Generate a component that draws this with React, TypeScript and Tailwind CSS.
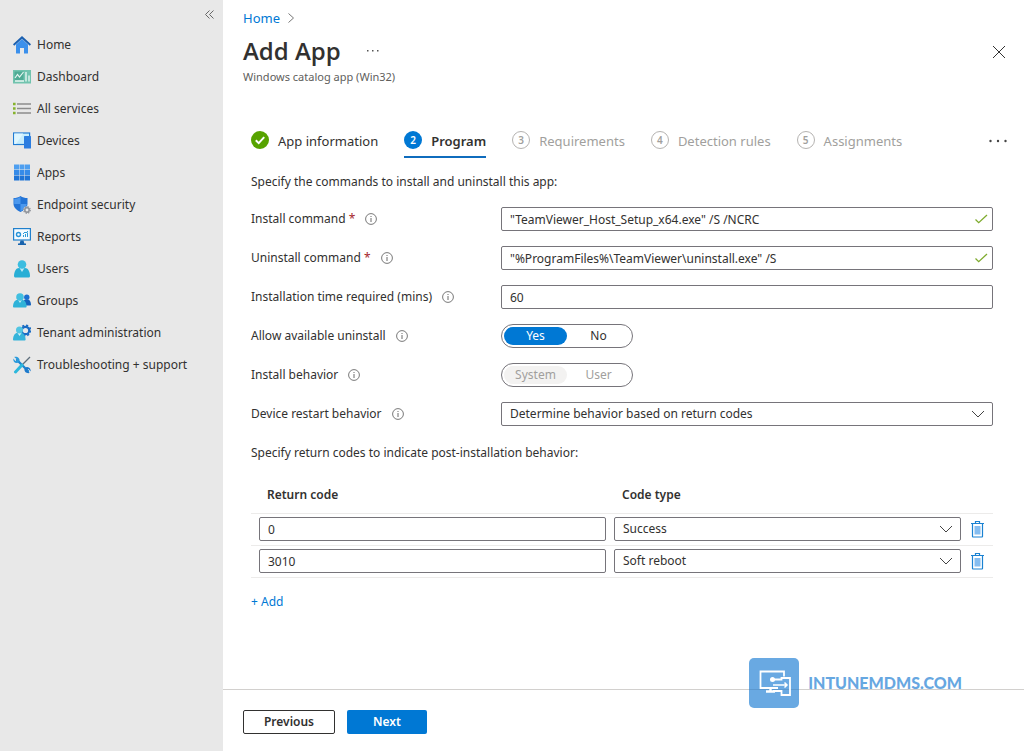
import { useState, type ReactNode } from "react";
import clsx from "clsx";

interface NavItem {
  title: string;
  icon: ReactNode;
}

interface ReturnCode {
  code: string;
  type: string;
}

const navItems: NavItem[] = [
  {
    title: "Home",
    icon: (
      <>
        <path d="M3 8.500 9 3l6 5.500V17a.5.5 0 0 1-.5.5H11V12H7v5.500H3.500A.5.5 0 0 1 3 17z" fill="#3b90ec" />
        <path d="M9 0 18 8.300l-1.200 1.400L9 2.700 1.200 9.700 0 8.300z" fill="#1a5fb0" />
      </>
    ),
  },
  {
    title: "Dashboard",
    icon: (
      <>
        <rect x="0" y="2" width="18" height="13.500" fill="#71c3ae" />
        <rect x="1.500" y="3.500" width="9" height="9" fill="#4fab95" />
        <path d="m2 10 2.500-3.500L6.500 9l4-5" fill="none" stroke="#e6f6f1" strokeWidth="1.200" />
        <path d="M2 13h9M13 4v9.500M16 7.500v6" fill="none" stroke="#e6f6f1" strokeWidth="1.400" />
      </>
    ),
  },
  {
    title: "All services",
    icon: (
      <>
        <path d="M4 4h14M4 8.500h14M4 13h14" stroke="#8c8c8c" strokeWidth="1.300" />
        <path d="M0 4h2.600M0 8.500h2.600M0 13h2.600" stroke="#86b32d" strokeWidth="2.600" />
      </>
    ),
  },
  {
    title: "Devices",
    icon: (
      <>
        <rect x=".6" y="1" width="16" height="11.500" fill="#c7edfc" stroke="#1f7bd4" strokeWidth="1.200" />
        <path d="M1.200 1.600h9L3 12H1.200z" fill="#def6ff" />
        <rect x="11" y="4" width="7" height="12.500" rx=".5" fill="#2b7de0" />
      </>
    ),
  },
  {
    title: "Apps",
    icon: (
      <>
        <path d="M1 .5h5v5H1zM6.500.5h5v5h-5zM12 .5h5v5h-5z" fill="#4e9ff0" />
        <path d="M1 6h5v5H1zM6.500 6h5v5h-5zM12 6h5v5h-5z" fill="#368be8" />
        <path d="M1 11.500h5v5H1zM6.500 11.500h5v5h-5zM12 11.500h5v5h-5z" fill="#1f74d6" />
      </>
    ),
  },
  {
    title: "Endpoint security",
    icon: (
      <>
        <path d="M7.500 0c2 1.400 4.300 2 7 2v5.500c0 4-3 6.800-7 8.500-4-1.700-7-4.500-7-8.500V2c2.700 0 5-.6 7-2z" fill="#2374d6" />
        <path d="M7.500 1v7H1.200V2.800c2.300 0 4.300-.5 6.300-1.800zM7.500 8h6.300c-.3 3.300-2.900 5.700-6.300 7.200z" fill="#4b98ee" />
        <circle cx="14" cy="14" r="3.600" fill="#e8e8e8" />
        <circle cx="14" cy="14" r="2.200" fill="none" stroke="#8e9299" strokeWidth="1.500" />
        <circle cx="14" cy="14" r="3.300" fill="none" stroke="#8e9299" strokeWidth="1.200" strokeDasharray="1.300 1.290" />
      </>
    ),
  },
  {
    title: "Reports",
    icon: (
      <>
        <rect x=".6" y=".600" width="16.800" height="11.400" fill="#f5fbff" stroke="#2080cc" strokeWidth="1.200" />
        <path d="M7.500 12.500h3L11.500 16H6.500zM5 15.500h8V17H5z" fill="#1763ad" />
        <circle cx="5.500" cy="6.500" r="2" fill="none" stroke="#2793d8" strokeWidth="1.400" />
        <path d="M10.500 9V7M12.500 9V6M14.500 9V4.500M10 6l2-2 1 1 2-2" fill="none" stroke="#2c9ad8" strokeWidth="1" />
      </>
    ),
  },
  {
    title: "Users",
    icon: (
      <>
        <path d="M1 16c.2-4.700 2-8 5-8h6c3 0 4.800 3.300 5 8 0 .8-.5 1.500-1.500 1.500h-13C1.500 17.500 1 16.800 1 16z" fill="#28aed5" />
        <path d="M6.500 8h5L9 12z" fill="#bfeaf5" />
        <circle cx="9" cy="4.500" r="4.300" fill="#3bbde0" />
      </>
    ),
  },
  {
    title: "Groups",
    icon: (
      <>
        <path d="M9.500 12.500c.2-3 1.500-5 3.300-5h2c1.900 0 3 2 3.200 5 0 .7-.4 1-1 1H10z" fill="#1463bd" />
        <circle cx="13.800" cy="5.200" r="2.700" fill="#1b6ed0" />
        <path d="M0 14.500c.2-4 1.800-6.500 4.300-6.500h5c2.500 0 4.100 2.500 4.300 6.500 0 .7-.4 1-1.200 1H1.200c-.8 0-1.200-.3-1.200-1z" fill="#2fb2d8" />
        <path d="M5 8h4l-2 3z" fill="#bfeaf5" />
        <circle cx="7" cy="5" r="3.800" fill="#41bfe0" />
      </>
    ),
  },
  {
    title: "Tenant administration",
    icon: (
      <>
        <circle cx="12.500" cy="6.500" r="3.700" fill="none" stroke="#1a6cc4" strokeWidth="2.200" />
        <circle cx="12.500" cy="6.500" r="5.200" fill="none" stroke="#1a6cc4" strokeWidth="1.600" strokeDasharray="2.100 1.980" />
        <path d="M0 15.500c.2-4 1.800-6.500 4.300-6.500h4c2.500 0 4.100 2.500 4.300 6.500 0 .7-.4 1-1.200 1H1.200c-.8 0-1.200-.3-1.200-1z" fill="#35b4da" />
        <path d="M4.500 9h4l-2 3z" fill="#d5f2f9" />
        <circle cx="6.500" cy="6" r="3.500" fill="#52c5e2" />
      </>
    ),
  },
  {
    title: "Troubleshooting + support",
    icon: (
      <>
        <path d="m17 1-8 8" stroke="#5f6f7c" strokeWidth="1.300" />
        <path d="m4 4 11 11" stroke="#1d85d0" strokeWidth="2.400" strokeLinecap="round" />
        <path d="M1.200 1 4 3.600 3.600 4.800 2.400 5 .300 2.500C0 5 1.500 7.500 4.500 7l2-2C7 2.500 4.500.2 1.200 1z" fill="#2b9bdc" />
        <path d="M16.800 17 14 14.400l.4-1.200 1.200-.2 2.100 2.500c.3-2.500-1.200-5-4.200-4.500l-2 2c-.5 2.500 2 4.800 5.300 4z" fill="#1d78cb" />
        <path d="m9 9-6.500 7" stroke="#2db8dc" strokeWidth="3" strokeLinecap="round" />
      </>
    ),
  },
];

const steps = ["App information", "Program", "Requirements", "Detection rules", "Assignments"];

const codeTypes = ["Success", "Soft reboot", "Hard reboot", "Retry", "Failed"];

const fieldStyle =
  "h-6 w-full rounded-xs border border-[#76747a] bg-white px-2 text-xs leading-5 text-[#323130] outline-none focus:border-[#0078d4]";

function ChevronDown() {
  return (
    <svg viewBox="0 0 14 8" className="pointer-events-none absolute top-2 right-2 h-2 w-3.5" fill="none" stroke="#444">
      <path d="m1 1 6 6 6-6" />
    </svg>
  );
}

function Tick() {
  return (
    <svg viewBox="0 0 14 10" className="pointer-events-none absolute top-[7px] right-[5px] h-2.5 w-3.5" fill="none" stroke="#7fab2e" strokeWidth="1.300">
      <path d="m1.500 5.500 3.200 3.200L13 1" />
    </svg>
  );
}

function Info() {
  return (
    <svg viewBox="0 0 12 12" className="ml-2.5 size-3 shrink-0" fill="none" stroke="#6a6a6a">
      <circle cx="6" cy="6" r="5.400" strokeWidth=".9" />
      <path d="M6 5v4M6 3v1" />
    </svg>
  );
}

function Trash() {
  return (
    <svg viewBox="0 0 13 17" className="h-[17px] w-[13px]" fill="none" stroke="#1a82d2">
      <path d="M0 2.500h13M4.500 2.500v-2h4v2M1.500 2.500v13a.5.5 0 0 0 .5.5h9a.5.5 0 0 0 .5-.5v-13" strokeWidth="1.200" />
      <rect x="3.500" y="5" width="6" height="8.500" fill="#85bdf0" stroke="none" />
    </svg>
  );
}

function Row({ label, htmlFor, required, children }: { label: string; htmlFor?: string; required?: boolean; children: ReactNode }) {
  return (
    <div className="flex h-6 items-center">
      <div className="flex w-[250px] shrink-0 items-center">
        <label htmlFor={htmlFor}>
          {label}
          {required && <span className="text-[#a4262c]"> *</span>}
        </label>
        <Info />
      </div>
      <div className="relative min-w-0 flex-1">{children}</div>
    </div>
  );
}

function Toggle({ name, options, disabled }: { name: string; options: string[]; disabled?: boolean }) {
  const [value, setValue] = useState(options[0]);

  return (
    <div role="radiogroup" aria-label={name} className="flex h-6 w-[132px] items-center rounded-full border border-[#76747a] px-0.5">
      {options.map((option) => (
        <label
          key={option}
          className={clsx(
            "flex h-[18px] flex-1 items-center justify-center rounded-full",
            disabled ? "text-[#a19f9d]" : "cursor-pointer",
            value === option && (disabled ? "bg-[#f3f2f1]" : "bg-[#0078d4] text-white")
          )}
        >
          <input
            type="radio"
            name={name}
            disabled={disabled}
            checked={value === option}
            onChange={() => setValue(option)}
            className="sr-only"
          />
          {option}
        </label>
      ))}
    </div>
  );
}

function Sidebar() {
  return (
    <aside className="w-[223px] shrink-0 bg-[#e8e8e8]">
      <div className="flex h-[29px] justify-end pr-2">
        <button aria-label="Collapse menu" className="flex h-7 w-3 items-center justify-center">
          <svg viewBox="0 0 9 9" className="size-[9px]" fill="none" stroke="#666">
            <path d="M4.500.5l-4 4 4 4M8.500.5l-4 4 4 4" />
          </svg>
        </button>
      </div>
      <nav>
        {navItems.map((item) => (
          <a key={item.title} href="#" className="flex h-8 items-center gap-1.5 pl-[13px] whitespace-nowrap">
            <svg viewBox="0 0 18 18" className="size-[18px] shrink-0">
              {item.icon}
            </svg>
            {item.title}
          </a>
        ))}
      </nav>
    </aside>
  );
}

function Steps() {
  return (
    <div className="flex items-start justify-between pr-4 pl-7">
      <div className="flex gap-[26px] text-[13px]">
        {steps.map((step, index) => (
          <button
            key={step}
            className={clsx(
              "flex h-[29px] items-start gap-[9px] border-b-2 whitespace-nowrap",
              index === 1 ? "border-[#0f6cbd] font-semibold" : "border-transparent",
              index > 1 && "text-[#a19f9d]"
            )}
          >
            {index === 0 ? (
              <svg viewBox="0 0 18 18" className="mt-0.5 size-[18px]">
                <circle cx="9" cy="9" r="9" fill="#57a300" />
                <path d="m4.800 9.200 2.900 2.900 5.500-6" fill="none" stroke="#fff" strokeWidth="2" />
              </svg>
            ) : (
              <span
                className={clsx(
                  "mt-0.5 flex size-[18px] items-center justify-center rounded-full text-[10px] font-semibold",
                  index === 1 ? "bg-[#0078d4] text-white" : "border border-[#b5b3b1]"
                )}
              >
                {index + 1}
              </span>
            )}
            <span className="leading-6">{step}</span>
          </button>
        ))}
      </div>
      <button aria-label="More steps" className="flex h-6 items-center">
        <svg viewBox="0 0 20 4" className="h-1 w-5" fill="#444">
          <circle cx="2.500" cy="2" r="1.200" />
          <circle cx="10" cy="2" r="1.200" />
          <circle cx="17.500" cy="2" r="1.200" />
        </svg>
      </button>
    </div>
  );
}

function ReturnCodes() {
  const [rows, setRows] = useState<ReturnCode[]>([
    { code: "0", type: "Success" },
    { code: "3010", type: "Soft reboot" },
  ]);

  const update = (index: number, patch: Partial<ReturnCode>) =>
    setRows((prev) => prev.map((row, i) => (i === index ? { ...row, ...patch } : row)));

  return (
    <>
      <table className="mt-3.5 w-full table-fixed border-collapse text-left">
        <thead>
          <tr className="h-9 border-b border-[#ecebea]">
            <th className="pl-4 font-semibold">Return code</th>
            <th className="pl-4 font-semibold">Code type</th>
            <th aria-label="Delete" className="w-8" />
          </tr>
        </thead>
        <tbody>
          {rows.map((row, index) => (
            <tr key={index} className="h-8 border-b border-[#ecebea]">
              <td className="pl-2">
                <input
                  aria-label="Return code"
                  value={row.code}
                  onChange={(e) => update(index, { code: e.target.value })}
                  className={clsx(fieldStyle, "block")}
                />
              </td>
              <td className="pl-2">
                <div className="relative">
                  <select
                    aria-label="Code type"
                    value={row.type}
                    onChange={(e) => update(index, { type: e.target.value })}
                    className={clsx(fieldStyle, "block appearance-none")}
                  >
                    {codeTypes.map((type) => (
                      <option key={type}>{type}</option>
                    ))}
                  </select>
                  <ChevronDown />
                </div>
              </td>
              <td className="pl-2.5">
                <button
                  aria-label="Delete return code"
                  className="block"
                  onClick={() => setRows((prev) => prev.filter((_, i) => i !== index))}
                >
                  <Trash />
                </button>
              </td>
            </tr>
          ))}
        </tbody>
      </table>
      <button
        className="mt-3.5 self-start leading-5 text-[#0078d4]"
        onClick={() => setRows((prev) => [...prev, { code: "", type: "Success" }])}
      >
        + Add
      </button>
    </>
  );
}

function Watermark() {
  return (
    <div className="absolute right-[62px] bottom-[43px] flex items-center gap-[9px] text-[#5ea3e0] opacity-95">
      <svg viewBox="0 0 50 50" className="size-[50px]" fill="none">
        <rect width="50" height="50" rx="5" fill="#61a5e1" />
        <path d="M0 31.500h50" stroke="#5596d0" />
        <g stroke="#fff" strokeWidth="1.800">
          <path d="M35 18.500v-5H11.500V30H29" />
          <path d="M24 21.500h8.500v-1.500H41v17H32.500V33H24" />
          <path d="M24 27h14M35.500 24.500 38 27l-2.500 2.500" strokeWidth="1.500" />
          <path d="M17 33.500h9M21.500 30v3.500" strokeWidth="2.400" />
        </g>
        <circle cx="23.500" cy="21.500" r="2.500" fill="#fff" />
      </svg>
      <span className="font-[Lato] text-base leading-6 font-black">INTUNEMDMS.COM</span>
    </div>
  );
}

export default function App() {
  const [installCommand, setInstallCommand] = useState('"TeamViewer_Host_Setup_x64.exe" /S /NCRC');
  const [uninstallCommand, setUninstallCommand] = useState('"%ProgramFiles%\\TeamViewer\\uninstall.exe" /S');
  const [minutes, setMinutes] = useState("60");

  return (
    <div className="flex min-h-screen bg-white font-['Noto_Sans',sans-serif] text-xs leading-5 text-[#323130]">
      <Sidebar />
      <main className="flex min-w-0 flex-1 flex-col">
        <div className="flex items-center gap-2 px-5 pt-2 text-[13px]">
          <a href="#" className="leading-5 text-[#0078d4]">
            Home
          </a>
          <svg viewBox="0 0 6 10" className="h-2.5 w-1.5" fill="none" stroke="#777">
            <path d="m.5.5 5 4.500-5 4.500" />
          </svg>
        </div>

        <header className="flex items-start justify-between pt-[7px] pr-[18px] pl-5">
          <div>
            <div className="flex items-center gap-[26px]">
              <h1 className="font-['Open_Sans',sans-serif] text-2xl leading-8 font-semibold">Add App</h1>
              <button aria-label="More actions">
                <svg viewBox="0 0 12 2" className="h-0.5 w-3" fill="#555">
                  <path d="M0 0h1.500v1.500H0zM5 0h1.500v1.500H5zM10 0h1.500v1.500H10z" />
                </svg>
              </button>
            </div>
            <p className="text-[11px] leading-5 text-[#605e5c]">Windows catalog app (Win32)</p>
          </div>
          <button aria-label="Close" className="mt-2.5">
            <svg viewBox="0 0 14 14" className="size-3.5" fill="none" stroke="#333">
              <path d="m1 1 12 12M13 1 1 13" />
            </svg>
          </button>
        </header>

        <div className="mt-[42px]">
          <Steps />
        </div>

        <section className="flex flex-col pt-3.5 pr-[31px] pb-8 pl-7">
          <p>Specify the commands to install and uninstall this app:</p>
          <div className="mt-[15px] flex flex-col gap-[15px]">
            <Row label="Install command" htmlFor="install" required>
              <input id="install" value={installCommand} onChange={(e) => setInstallCommand(e.target.value)} className={clsx(fieldStyle, "block")} />
              <Tick />
            </Row>
            <Row label="Uninstall command" htmlFor="uninstall" required>
              <input id="uninstall" value={uninstallCommand} onChange={(e) => setUninstallCommand(e.target.value)} className={clsx(fieldStyle, "block")} />
              <Tick />
            </Row>
            <Row label="Installation time required (mins)" htmlFor="minutes">
              <input id="minutes" value={minutes} onChange={(e) => setMinutes(e.target.value)} className={clsx(fieldStyle, "block")} />
            </Row>
            <Row label="Allow available uninstall">
              <Toggle name="Allow available uninstall" options={["Yes", "No"]} />
            </Row>
            <Row label="Install behavior">
              <Toggle name="Install behavior" options={["System", "User"]} disabled />
            </Row>
            <Row label="Device restart behavior" htmlFor="restart">
              <select id="restart" className={clsx(fieldStyle, "block appearance-none")}>
                <option>Determine behavior based on return codes</option>
                <option>No specific action</option>
              </select>
              <ChevronDown />
            </Row>
          </div>
          <p className="mt-[17px]">Specify return codes to indicate post-installation behavior:</p>
          <ReturnCodes />
        </section>

        <footer className="relative mt-auto flex gap-3 border-t border-[#d2d0ce] px-5 pt-5 pb-[17px]">
          <button className="h-6 w-[92px] rounded-xs border border-[#323130] leading-5 font-semibold">Previous</button>
          <button className="h-6 w-20 rounded-xs bg-[#0078d4] leading-5 font-semibold text-white">Next</button>
          <Watermark />
        </footer>
      </main>
    </div>
  );
}
